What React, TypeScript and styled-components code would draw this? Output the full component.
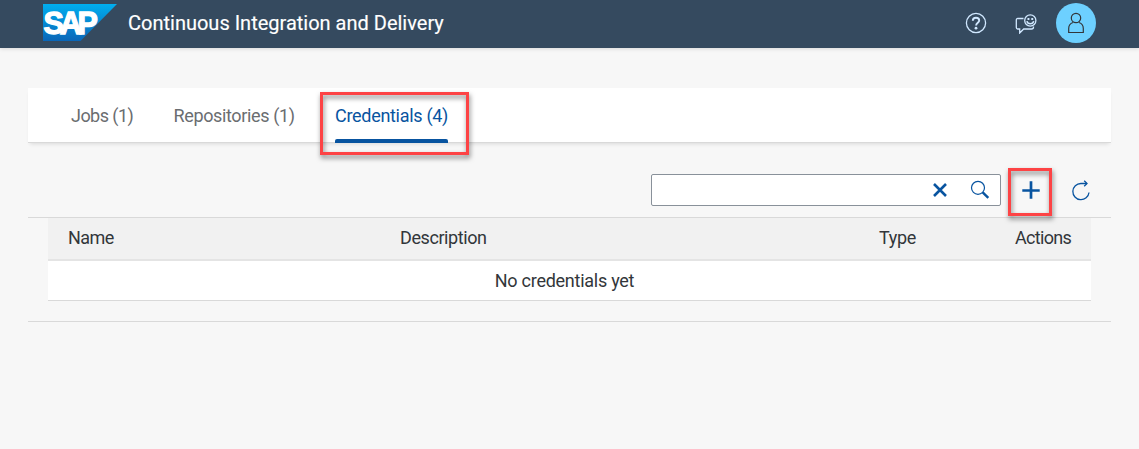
import React from "react";
import styled, { createGlobalStyle } from "styled-components";

const GlobalStyle = createGlobalStyle`
  * { box-sizing: border-box; }
  body {
    margin: 0;
    background: #f7f7f7;
    font-family: Roboto, "Liberation Sans", sans-serif;
    color: #32363a;
  }
`;

const Page = styled.div`
  min-height: 449px;
`;

const ShellBar = styled.header`
  display: flex;
  align-items: center;
  height: 48px;
  padding: 0 43px;
  background: #354a5f;
  box-shadow: 0 1px 4px rgba(0, 0, 0, 0.12);
`;

const Logo = styled.svg`
  display: block;
  width: 75px;
  height: 37px;
  margin-top: -3px;
`;

const Title = styled.h1`
  flex: 1;
  margin: 0 0 2px 10px;
  font-size: 20px;
  line-height: 24px;
  font-weight: 400;
  letter-spacing: 0;
  color: #fff;
  -webkit-text-stroke: 0.15px #fff;
`;

const ShellActions = styled.div`
  display: flex;
  align-items: center;
  margin-top: -2px;
`;

const ShellIcon = styled.svg<{ $gap: number }>`
  display: block;
  width: 22px;
  height: 22px;
  margin-right: ${(p) => p.$gap}px;
  fill: none;
  stroke: #d1e8ff;
  stroke-width: 1.3;
`;

const Avatar = styled.div`
  display: flex;
  align-items: center;
  justify-content: center;
  width: 40px;
  height: 40px;
  border-radius: 50%;
  background: #6dd0ff;
`;

const Content = styled.main`
  padding: 40px 28px 0;
`;

const TabBar = styled.nav`
  display: flex;
  height: 55px;
  padding-left: 43px;
  background: #fff;
  border-bottom: 1px solid #d9d9d9;
  box-shadow: 0 3px 4px -2px rgba(0, 0, 0, 0.12);
`;

const Tab = styled.div<{ $width: number; $gap?: number; $active?: boolean; $spacing: number }>`
  position: relative;
  width: ${(p) => p.$width}px;
  height: 55px;
  margin-right: ${(p) => p.$gap ?? 0}px;
  padding-top: 17px;
  font-size: 18px;
  line-height: 22px;
  letter-spacing: ${(p) => p.$spacing}px;
  white-space: nowrap;
  color: ${(p) => (p.$active ? "#0854a0" : "#6a6d70")};
`;

const Underline = styled.div`
  position: absolute;
  left: 0;
  right: 0;
  bottom: 0;
  height: 4px;
  border-radius: 2px 2px 0 0;
  background: #0854a0;
`;

const Highlight = styled.div<{ $top: number; $right: number; $bottom: number; $left: number }>`
  position: absolute;
  top: ${(p) => p.$top}px;
  right: ${(p) => p.$right}px;
  bottom: ${(p) => p.$bottom}px;
  left: ${(p) => p.$left}px;
  border: 3px solid #fd4345;
  filter: drop-shadow(1px 3px 2.5px rgba(0, 0, 0, 0.5));
  pointer-events: none;
`;

const Toolbar = styled.div`
  display: flex;
  align-items: center;
  justify-content: flex-end;
  height: 74px;
  padding: 21px 19px 1px 0;
`;

const SearchField = styled.div`
  display: flex;
  align-items: center;
  justify-content: flex-end;
  width: 350px;
  height: 32px;
  padding-right: 9px;
  border: 1px solid #89919a;
  border-radius: 2px;
  background: #fff;
`;

const Icon = styled.svg`
  display: block;
  width: 22px;
  height: 22px;
  fill: none;
  stroke: #0854a0;
`;

const ClearIcon = styled(Icon)`
  margin-right: 18px;
  stroke-width: 2.6;
`;

const AddButton = styled.div`
  position: relative;
  margin-left: 19px;
`;

const RefreshIcon = styled(Icon)`
  margin-left: 28px;
  stroke-width: 1.3;
`;

const TableArea = styled.section`
  height: 105px;
  padding: 0 20px;
  border-top: 1px solid #d9d9d9;
  border-bottom: 1px solid #d9d9d9;
`;

const HeadRow = styled.div`
  display: grid;
  grid-template-columns: 332px 479px 136px 1fr;
  height: 43px;
  padding-left: 20px;
  border-bottom: 2px solid #e4e4e4;
  background: #f1f1f1;
  font-size: 18px;
  line-height: 40px;
`;

const HeadCell = styled.div<{ $spacing: number }>`
  letter-spacing: ${(p) => p.$spacing}px;
`;

const EmptyRow = styled.div`
  height: 40px;
  padding-right: 10px;
  border-bottom: 1px solid #d9d9d9;
  background: #fff;
  font-size: 18px;
  line-height: 40px;
  letter-spacing: -0.26px;
  text-align: center;
`;

export default function App() {
  return (
    <Page>
      <GlobalStyle />
      <ShellBar>
        <Logo viewBox="0 0 75 37">
          <defs>
            <linearGradient id="sap" x1="0" y1="0" x2="0" y2="1">
              <stop offset="0" stopColor="#00aeef" />
              <stop offset="1" stopColor="#0a66b8" />
            </linearGradient>
          </defs>
          <path d="M0 0H74L37.500 37H0Z" fill="url(#sap)" />
          <text
            x="0.5"
            y="29.6"
            fill="#fff"
            stroke="#fff"
            strokeWidth="1.3"
            fontFamily="Liberation Sans, sans-serif"
            fontWeight="700"
            fontSize="30.5"
            letterSpacing="-4.2"
          >
            SAP
          </text>
        </Logo>
        <Title>Continuous Integration and Delivery</Title>
        <ShellActions>
          <ShellIcon $gap={28} viewBox="0 0 22 22">
            <circle cx="11" cy="11" r="9.600" />
            <path d="M7.800 8.800C7.800 6.700 9.100 5.700 11 5.700s3.200 1 3.200 2.800c0 2.100-3.100 2.400-3.100 4.900" strokeWidth="1.900" />
            <circle cx="11" cy="16.200" r="1.400" fill="#d1e8ff" stroke="none" />
          </ShellIcon>
          <ShellIcon $gap={19} viewBox="0 0 22 22">
            <path d="M8.500 6.500H2.800q-1.500 0-1.500 1.500v7.500q0 1.500 1.500 1.500h1.900v4l4-4H16.500q2 0 2-2v-.5" />
            <circle cx="15.300" cy="8.500" r="5.600" />
            <path d="M11.900 9.100c.8 3.500 6 3.500 6.800 0" strokeWidth="1.500" />
            <path d="M12.500 7h1.900M16.300 7h1.900" strokeWidth="1.800" />
          </ShellIcon>
          <Avatar>
            <svg width="18" height="22" viewBox="0 0 18 22" fill="none" stroke="#32363a" strokeWidth="1.200">
              <circle cx="9" cy="6" r="4.700" />
              <path d="M6 10.500C3 11.500 1.700 13.500 1.700 16.500V20.500H16.300V16.500C16.300 13.500 15 11.500 12 10.500" />
            </svg>
          </Avatar>
        </ShellActions>
      </ShellBar>
      <Content>
        <TabBar>
          <Tab $width={62} $gap={40.5} $spacing={-0.55}>Jobs (1)</Tab>
          <Tab $width={121} $gap={40.5} $spacing={-0.36}>Repositories (1)</Tab>
          <Tab $width={113} $spacing={-0.3} $active>
            Credentials (4)
            <Underline />
            <Highlight $top={4} $right={-21} $bottom={-12} $left={-15} />
          </Tab>
        </TabBar>
        <Toolbar>
          <SearchField>
            <ClearIcon viewBox="0 0 22 22">
              <path d="M5 5L17 17M17 5L5 17" />
            </ClearIcon>
            <Icon viewBox="0 0 22 22">
              <circle cx="9" cy="8.800" r="6.500" strokeWidth="1.200" />
              <path d="M13.700 13.300L19.300 18.900" strokeWidth="2.400" />
            </Icon>
          </SearchField>
          <AddButton>
            <Icon viewBox="0 0 22 22" strokeWidth="2.700">
              <path d="M11 2.300V19.700M2.300 11.500H19.700" />
            </Icon>
            <Highlight $top={-11} $right={-10} $bottom={-15} $left={-12} />
          </AddButton>
          <RefreshIcon viewBox="0 0 22 22">
            <path d="M16.700 4.500H10.900A8.100 8.100 0 1 0 19 13.500" />
            <path d="M14.200 1.800L17 4.500L14.200 7.200" />
          </RefreshIcon>
        </Toolbar>
        <TableArea>
          <HeadRow>
            <HeadCell $spacing={-0.55}>Name</HeadCell>
            <HeadCell $spacing={-0.42}>Description</HeadCell>
            <HeadCell $spacing={-0.35}>Type</HeadCell>
            <HeadCell $spacing={-0.7}>Actions</HeadCell>
          </HeadRow>
          <EmptyRow>No credentials yet</EmptyRow>
        </TableArea>
      </Content>
    </Page>
  );
}
